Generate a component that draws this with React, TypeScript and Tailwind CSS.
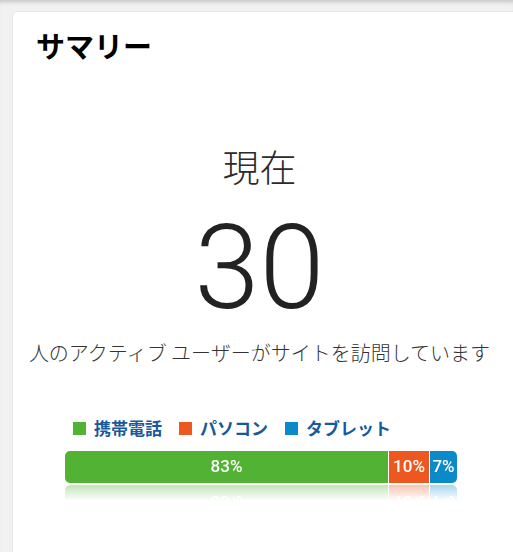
import React from 'react';

const JP = "font-['Noto_Sans_CJK_JP','Noto_Sans',sans-serif]";

const SEGMENTS = [
  { label: '携帯電話', color: 'bg-[#52b233]' },
  { label: 'パソコン', color: 'bg-[#ec581f]' },
  { label: 'タブレット', color: 'bg-[#0a8ac8]' },
];

const DeviceBar: React.FC = () => (
  <div className="flex h-[32px] w-[392px] overflow-hidden rounded-[5px] font-['Roboto',sans-serif] text-[17px] font-medium text-white [-webkit-box-reflect:below_2px_linear-gradient(transparent_50%,rgba(255,255,255,0.35))]">
    <div className="flex w-[323px] items-center justify-center bg-[#52b233]">83%</div>
    <div className="w-px bg-white" />
    <div className="flex w-[40px] items-center justify-center bg-[#ec581f]">10%</div>
    <div className="w-px bg-white" />
    <div className="flex flex-1 items-center justify-center bg-[#0a8ac8]">7%</div>
  </div>
);

export default function App() {
  return (
    <div className="h-[552px] w-[513px] overflow-hidden bg-[#f1f1f1] pt-[12px] pl-[13px] shadow-[inset_0_5px_4px_-3px_rgba(0,0,0,0.18)]">
      <div className="h-[600px] w-[520px] rounded-tl-[4px] bg-white shadow-[0_0_2px_rgba(0,0,0,0.12)]">
        <div className="w-[493px]">
          {/* Title */}
          <h2 className={`${JP} pt-[16px] pl-[23px] text-[29px] leading-[34px] font-bold text-black`}>サマリー</h2>

          {/* Active users */}
          <div className="mt-[82px] flex flex-col items-center text-[#2b2b2b]">
            <div className={`${JP} text-[37px] leading-[44px] font-light`}>現在</div>
            <div className="mt-[30px] font-['Roboto',sans-serif] text-[117px] leading-[100px] font-light text-[#222]">30</div>
            <div className={`${JP} mt-[22px] text-[20px] leading-[26px] font-light text-[#333]`}>
              人のアクティブ ユーザーがサイトを訪問しています
            </div>
          </div>

          {/* Legend */}
          <div className="mt-[51px] flex items-center gap-[17px] pl-[60px]">
            {SEGMENTS.map((s) => (
              <div key={s.label} className="flex items-center gap-[8px]">
                <span className={`h-[13px] w-[13px] ${s.color}`} />
                <span className={`${JP} text-[17px] leading-[22px] font-bold text-[#17599b]`}>{s.label}</span>
              </div>
            ))}
          </div>

          {/* Bar */}
          <div className="mt-[12px] pl-[52px]">
            <DeviceBar />
          </div>
        </div>
      </div>
    </div>
  );
}
